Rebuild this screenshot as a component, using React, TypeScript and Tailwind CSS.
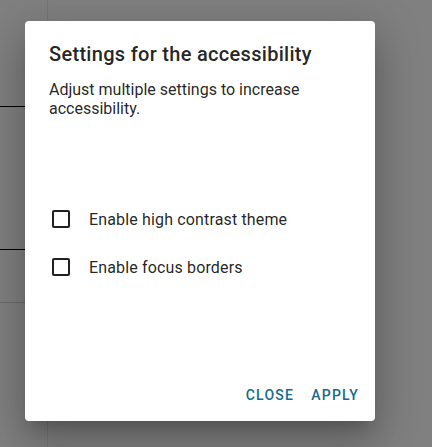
import React from "react";

function Box() {
  return (
    <span className="block w-[18px] h-[18px] border-2 border-[#212121] rounded-[2px] shrink-0" />
  );
}

function Row({ label }: { label: string }) {
  return (
    <label className="flex items-center h-[48px] pl-[27px]">
      <Box />
      <span className="ml-[19px] text-[16px] text-[rgba(0,0,0,0.87)] leading-[19px] tracking-[0.15px]">{label}</span>
    </label>
  );
}

export default function App() {
  return (
    <div
      className="relative w-[432px] h-[447px] overflow-hidden bg-[#808080]"
      style={{ fontFamily: "Roboto, 'Liberation Sans', sans-serif" }}
    >
      {/* underlying page (dimmed) */}
      <div className="w-[48px] h-full border-r border-[#757575] flex flex-col">
        <div className="h-[107px] border-b border-black" />
        <div className="h-[143px] border-b border-black" />
        <div className="h-[53px] border-b border-[#6a6a6a]" />
      </div>

      {/* dialog */}
      <div className="absolute left-[25px] top-[21px] w-[350px] h-[400px] bg-white rounded-[4px] shadow-[0px_11px_15px_-7px_rgba(0,0,0,0.2),0px_24px_38px_3px_rgba(0,0,0,0.14),0px_9px_46px_8px_rgba(0,0,0,0.12)] flex flex-col">
        <h2 className="pt-[17px] px-6 text-[20px] leading-8 font-medium text-[rgba(0,0,0,0.87)] tracking-[0.3px]">
          Settings for the accessibility
        </h2>
        <p className="mt-[10px] px-6 text-[16px] leading-[19px] text-[rgba(0,0,0,0.87)]">
          Adjust multiple settings to increase accessibility.
        </p>
        <div className="mt-[77px] flex flex-col">
          <Row label="Enable high contrast theme" />
          <Row label="Enable focus borders" />
        </div>
        <div className="mt-auto flex justify-end items-center p-2 gap-[1px]">
          <button className="h-9 px-2 text-[14px] font-medium tracking-[1.25px] text-[#156a8e] uppercase">
            Close
          </button>
          <button className="h-9 px-2 text-[14px] font-medium tracking-[1.25px] text-[#156a8e] uppercase">
            Apply
          </button>
        </div>
      </div>
    </div>
  );
}
